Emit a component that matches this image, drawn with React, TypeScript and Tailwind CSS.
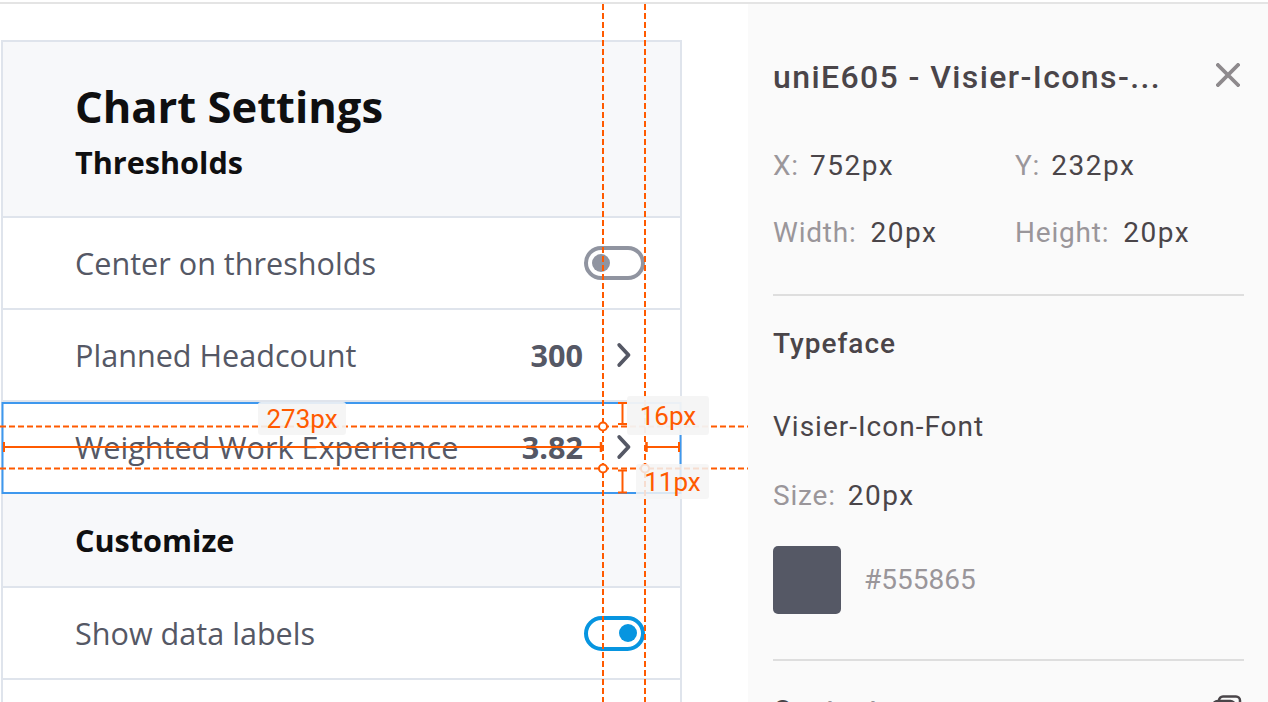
import React from "react";

const OS = { fontFamily: '"Open Sans", "Noto Sans", sans-serif' };
const RB = { fontFamily: 'Roboto, "Liberation Sans", sans-serif' };

function Toggle({ on }: { on: boolean }) {
  return on ? (
    <div className="w-[61px] h-[35px] rounded-full border-[4px] border-[#0795e0] flex items-center justify-end pr-[4px]">
      <div className="w-[18px] h-[18px] rounded-full bg-[#0795e0]" />
    </div>
  ) : (
    <div className="w-[61px] h-[34px] rounded-full border-[4px] border-[#9094a0] flex items-center pl-[4px]">
      <div className="w-[18px] h-[18px] rounded-full bg-[#9094a0]" />
    </div>
  );
}

function Chevron() {
  return (
    <div className="w-[42px] h-[42px] flex items-center justify-center">
      <svg width="16" height="26" viewBox="0 0 16 26" fill="none">
        <path d="M3.2 3 L12.5 13 L3.2 23" stroke="#555865" strokeWidth="3.8" strokeLinecap="round" strokeLinejoin="round" />
      </svg>
    </div>
  );
}

function Row({ label, value, toggle }: { label: string; value?: string; toggle?: boolean }) {
  return (
    <div className="h-[92px] flex items-center pl-[72px] pr-[35px] border-b-2 border-[#dfe4ec] bg-white">
      <div className="flex-1 text-[30.6px] text-[#555865] leading-[40px]" style={OS}>
        {label}
      </div>
      {toggle !== undefined ? (
        <Toggle on={toggle} />
      ) : (
        <>
          <div className="text-[30.6px] font-bold text-[#555865] leading-[40px]" style={OS}>
            {value}
          </div>
          <div className="ml-[20px]">
            <Chevron />
          </div>
        </>
      )}
    </div>
  );
}

function Label({ text, className }: { text: string; className: string }) {
  return (
    <div
      className={`absolute flex items-center justify-center rounded-[3px] text-[26px] text-[#ff5a00] leading-none ${className}`}
      style={RB}
    >
      {text}
    </div>
  );
}

export default function App() {
  const orange = "#ff5a00";
  return (
    <div className="relative w-[1268px] h-[702px] overflow-hidden bg-white">
      <div className="h-[2px] bg-white" />
      <div className="h-[2px] bg-[#e4e4e4]" />
      <div className="flex h-[698px]">
        {/* Left area */}
        <div className="w-[748px] pt-[36px] pl-[1px] bg-white">
          <div className="w-[681px] border-2 border-[#dfe4ec] border-b-0">
            <div className="h-[176px] bg-[#f7f8fa] border-b-2 border-[#dfe4ec] pl-[72px] pt-[39px]">
              <div className="text-[43.5px] font-bold leading-[52px] text-[#0f0f10]" style={OS}>
                Chart Settings
              </div>
              <div className="mt-[11px] text-[30.6px] font-bold leading-[36px] text-[#0f0f10]" style={OS}>
                Thresholds
              </div>
            </div>
            <Row label="Center on thresholds" toggle={false} />
            <Row label="Planned Headcount" value="300" />
            <Row label="Weighted Work Experience" value="3.82" />
            <div className="h-[94px] bg-[#f7f8fa] border-b-2 border-[#dfe4ec] flex items-center pl-[72px]">
              <div className="text-[30.6px] font-bold leading-[36px] text-[#0f0f10]" style={OS}>
                Customize
              </div>
            </div>
            <Row label="Show data labels" toggle={true} />
            <div className="h-[90px] bg-white" />
          </div>
        </div>

        {/* Right panel */}
        <div className="flex-1 bg-[#fafafa] pl-[25px] pr-[24px]" style={RB}>
          <div className="mt-[55px] h-[36px] flex items-center justify-between">
            <div className="text-[32px] font-medium leading-[36px] tracking-[1.4px] text-[#4a4549] whitespace-nowrap">
              uniE605 - Visier-Icons-...
            </div>
            <svg width="24" height="24" viewBox="0 0 24 24" className="mr-[4px] -mt-[4px]">
              <path d="M2 2 L22 22 M22 2 L2 22" stroke="#8e8a8d" strokeWidth="3.8" strokeLinecap="square" />
            </svg>
          </div>
          <div className="mt-[54px] grid grid-cols-[242px_1fr] text-[28px] leading-[34px]">
            <div className="flex gap-[11px]">
              <span className="text-[#9a969a] tracking-[0.8px]">X:</span>
              <span className="text-[#4a4549] tracking-[1.5px]">752px</span>
            </div>
            <div className="flex gap-[11px]">
              <span className="text-[#9a969a] tracking-[0.8px]">Y:</span>
              <span className="text-[#4a4549] tracking-[1.5px]">232px</span>
            </div>
          </div>
          <div className="mt-[33px] grid grid-cols-[242px_1fr] text-[28px] leading-[34px]">
            <div className="flex gap-[14px]">
              <span className="text-[#9a969a] tracking-[0.8px]">Width:</span>
              <span className="text-[#4a4549] tracking-[1.5px]">20px</span>
            </div>
            <div className="flex gap-[14px]">
              <span className="text-[#9a969a] tracking-[0.8px]">Height:</span>
              <span className="text-[#4a4549] tracking-[1.5px]">20px</span>
            </div>
          </div>
          <div className="mt-[44px] h-[2px] bg-[#dedede]" />
          <div className="mt-[31px] text-[28px] font-medium leading-[34px] tracking-[1px] text-[#4a4549]">Typeface</div>
          <div className="mt-[49px] text-[28px] leading-[34px] tracking-[1px] text-[#4a4549]">Visier-Icon-Font</div>
          <div className="mt-[35px] flex gap-[12px] text-[28px] leading-[34px]">
            <span className="text-[#9a969a] tracking-[0.8px]">Size:</span>
            <span className="text-[#4a4549] tracking-[1.5px]">20px</span>
          </div>
          <div className="mt-[33px] flex items-center gap-[23px]">
            <div className="w-[68px] h-[68px] rounded-[5px] bg-[#555865]" />
            <div className="text-[28px] leading-[34px] text-[#9a969a]">#555865</div>
          </div>
          <div className="mt-[45px] h-[2px] bg-[#dedede]" />
          <div className="mt-[33px] flex items-start justify-between">
            <div className="text-[28px] font-medium leading-[34px] tracking-[1px] text-[#4a4549]">Content</div>
            <svg width="30" height="30" viewBox="0 0 30 30" fill="none" className="mt-[1px] mr-[2px]">
              <rect x="7" y="1.5" width="21" height="21" rx="4" stroke="#4a4549" strokeWidth="2.5" />
              <rect x="1.5" y="6" width="21" height="21" rx="4" stroke="#4a4549" strokeWidth="2.5" fill="#fafafa" />
            </svg>
          </div>
        </div>
      </div>

      {/* Measurement overlay */}
      <svg className="absolute left-0 top-0 pointer-events-none" width="1268" height="702" viewBox="0 0 1268 702">
        <rect x="2.5" y="403" width="678" height="90" fill="none" stroke="#3e98ee" strokeWidth="2" />
        <line x1="603" y1="4" x2="603" y2="702" stroke={orange} strokeWidth="2" strokeDasharray="6 3" />
        <line x1="645" y1="4" x2="645" y2="702" stroke={orange} strokeWidth="2" strokeDasharray="6 3" />
        <line x1="0" y1="426.5" x2="748" y2="426.5" stroke={orange} strokeWidth="2" strokeDasharray="6 3" />
        <line x1="0" y1="468.5" x2="748" y2="468.5" stroke={orange} strokeWidth="2" strokeDasharray="6 3" />
        <line x1="3" y1="447" x2="602" y2="447" stroke={orange} strokeWidth="2" />
        <line x1="4" y1="442" x2="4" y2="452" stroke={orange} strokeWidth="2" />
        <line x1="601" y1="442" x2="601" y2="452" stroke={orange} strokeWidth="2.5" />
        <line x1="646" y1="447" x2="680" y2="447" stroke={orange} strokeWidth="2" />
        <line x1="646.5" y1="442" x2="646.5" y2="452" stroke={orange} strokeWidth="2.5" />
        <line x1="679" y1="442" x2="679" y2="452" stroke={orange} strokeWidth="2" />
        <line x1="622.5" y1="403" x2="622.5" y2="424" stroke={orange} strokeWidth="2" />
        <line x1="618" y1="403" x2="627" y2="403" stroke={orange} strokeWidth="2" />
        <line x1="618" y1="424" x2="627" y2="424" stroke={orange} strokeWidth="2" />
        <line x1="622.5" y1="470" x2="622.5" y2="492.5" stroke={orange} strokeWidth="2" />
        <line x1="618" y1="470.5" x2="627" y2="470.5" stroke={orange} strokeWidth="2" />
        <line x1="618" y1="492.5" x2="627" y2="492.5" stroke={orange} strokeWidth="2" />
        <circle cx="603" cy="426.5" r="4" fill="#fff" stroke={orange} strokeWidth="2" />
        <circle cx="603" cy="468.5" r="4" fill="#fff" stroke={orange} strokeWidth="2" />
        <circle cx="645" cy="468.5" r="4" fill="#fff" stroke={orange} strokeWidth="2" />
      </svg>

      <Label text="273px" className="left-[258px] top-[402px] w-[88px] h-[33px] bg-[#f4f4f4]/90" />
      <Label text="16px" className="left-[627px] top-[396px] w-[82px] h-[39px] bg-[#f4f4f4]/95" />
      <Label text="11px" className="left-[636px] top-[464px] w-[73px] h-[35px] bg-[#f4f4f4]/85" />
    </div>
  );
}
